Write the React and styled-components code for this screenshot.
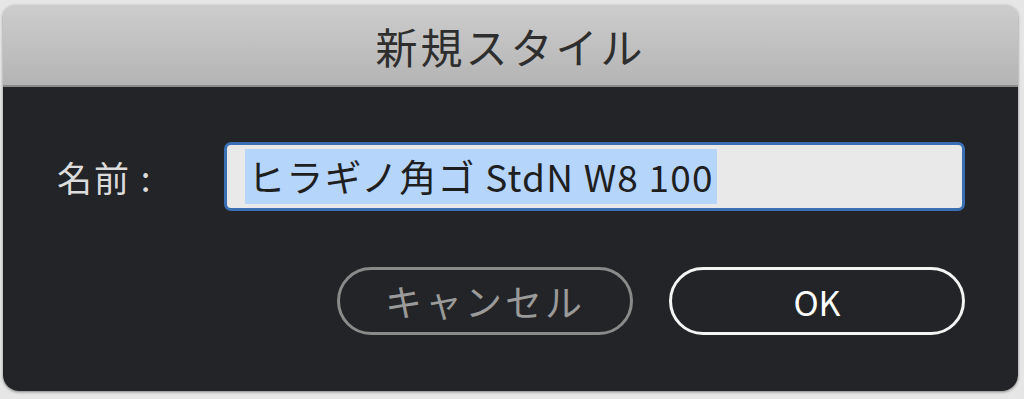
import React from 'react';
import styled, { createGlobalStyle } from 'styled-components';

const GlobalStyle = createGlobalStyle`
  html, body {
    margin: 0;
    padding: 0;
    background: #e6e6e6;
    font-family: "Noto Sans CJK JP", "Noto Sans", sans-serif;
  }
`;

const Page = styled.div`
  width: 1024px;
  height: 399px;
  padding: 5px 6px 8px 3px;
  box-sizing: border-box;
`;

const Window = styled.div`
  height: 100%;
  display: flex;
  flex-direction: column;
  border-radius: 12px 12px 16px 16px;
  overflow: hidden;
  box-shadow: 0 1px 3px rgba(0, 0, 0, 0.45);
`;

const TitleBar = styled.div`
  height: 80px;
  flex-shrink: 0;
  display: flex;
  align-items: center;
  justify-content: center;
  background: linear-gradient(#cdcdcd, #b4b4b4);
  border-bottom: 2px solid #8a8a8a;
  color: #2e2e2e;
  font-size: 42px;
  letter-spacing: 3px;
`;

const Body = styled.div`
  flex: 1;
  background: #232427;
  display: flex;
  flex-direction: column;
  padding: 55px 53px 0 54px;
`;

const FieldRow = styled.div`
  display: flex;
  align-items: center;
  gap: 50px;
`;

const Label = styled.span`
  width: 117px;
  color: #dcdcdc;
  font-size: 35px;
  letter-spacing: 2px;
  white-space: nowrap;
`;

const Field = styled.div`
  flex: 1;
  height: 69px;
  box-sizing: border-box;
  border: 3px solid #3b6fb3;
  border-radius: 7px;
  background: #e9e9ea;
  display: flex;
  align-items: center;
  padding-left: 18px;
`;

const Selected = styled.span`
  background: #b6d5fb;
  color: #1f1f1f;
  font-size: 37px;
  line-height: 55px;
  letter-spacing: 1.2px;
  padding: 0 3px;
  white-space: nowrap;
`;

const Buttons = styled.div`
  display: flex;
  justify-content: flex-end;
  gap: 36px;
  margin-top: 56px;
`;

const Button = styled.div`
  width: 296px;
  height: 68px;
  box-sizing: border-box;
  border-radius: 34px;
  border: 3px solid ${p => (p.$primary ? '#f4f4f4' : '#8a8a8a')};
  color: ${p => (p.$primary ? '#ffffff' : '#9a9a9a')};
  display: flex;
  align-items: center;
  justify-content: center;
  font-size: ${p => (p.$primary ? '34px' : '37px')};
  letter-spacing: ${p => (p.$primary ? '0' : '3px')};
`;

export default function App() {
  return (
    <>
      <GlobalStyle />
      <Page>
        <Window>
          <TitleBar>新規スタイル</TitleBar>
          <Body>
            <FieldRow>
              <Label>名前 :</Label>
              <Field>
                <Selected>ヒラギノ角ゴ StdN W8 100</Selected>
              </Field>
            </FieldRow>
            <Buttons>
              <Button>キャンセル</Button>
              <Button $primary>OK</Button>
            </Buttons>
          </Body>
        </Window>
      </Page>
    </>
  );
}
